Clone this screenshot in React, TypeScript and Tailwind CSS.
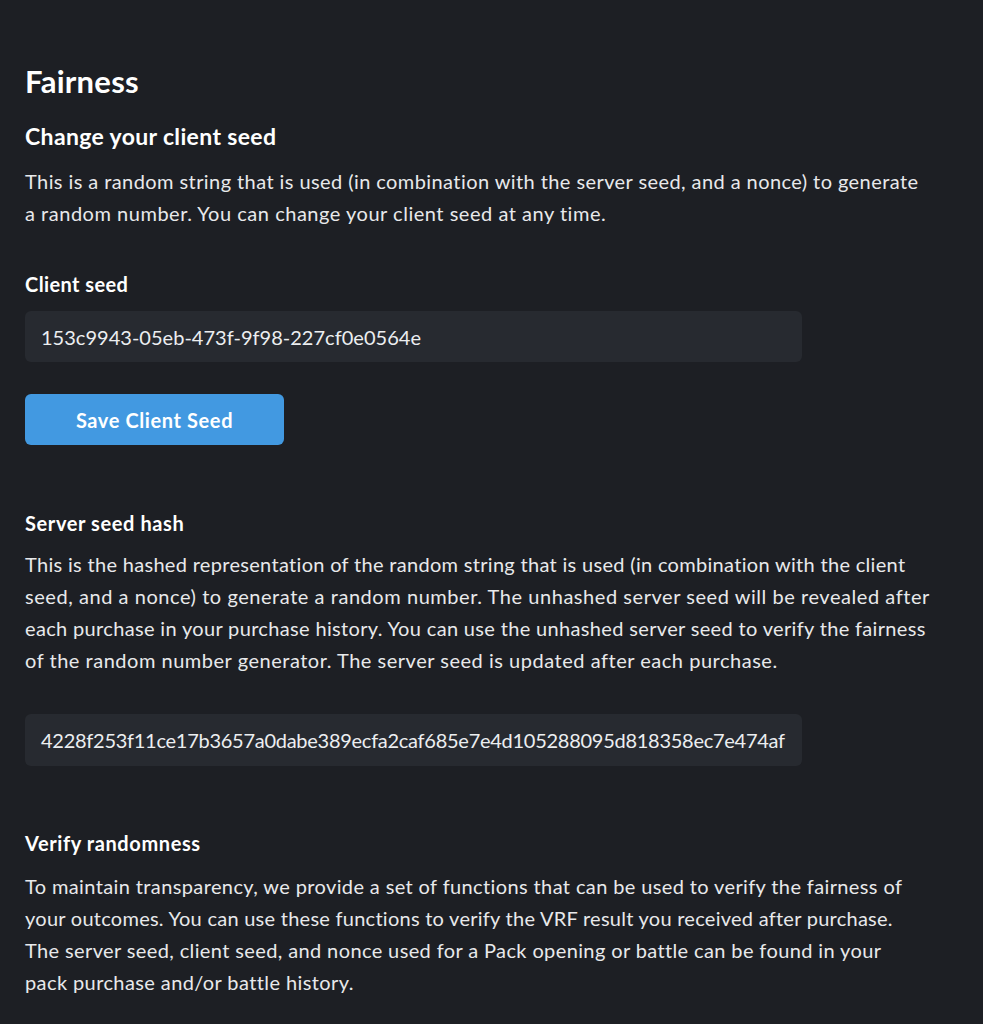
const seedHash = '4228f253f11ce17b3657a0dabe389ecfa2caf685e7e4d105288095d818358ec7e474af';

type Line = { text: string; cls: string };

function Lines({ lines, className }: { lines: Line[]; className?: string }) {
  return (
    <p className={className}>
      {lines.map((l, i) => (
        <span key={i} className={`block whitespace-nowrap ${l.cls}`}>
          {l.text}
        </span>
      ))}
    </p>
  );
}

export default function App() {
  return (
    <div className="min-h-[1024px] w-full bg-[#1d1f24] text-white font-['Lato','Liberation_Sans',sans-serif]">
      <div className="px-[25px] pt-[63px] pb-10">
        <h1 className="text-[31px] leading-[36px] font-bold tracking-[0.25px]">Fairness</h1>

        <h2 className="mt-[23px] text-[23px] leading-[28px] font-bold tracking-[0.35px]">Change your client seed</h2>
        <Lines
          className="mt-[15px] text-[20px] leading-[32px] text-[#e8e9eb]"
          lines={[
            { text: 'This is a random string that is used (in combination with the server seed, and a nonce) to generate', cls: 'tracking-[0.42px]' },
            { text: 'a random number. You can change your client seed at any time.', cls: 'tracking-[0.52px]' },
          ]}
        />

        <label className="block mt-[43px] text-[20px] leading-[24px] font-bold tracking-[0.4px]">Client seed</label>
        <div className="mt-[15px] w-[777px] h-[51px] rounded-md bg-[#272a30] flex items-center px-4 text-[20px] text-[#eceef0] tracking-[0.02px]">
          153c9943-05eb-473f-9f98-227cf0e0564e
        </div>

        <button className="mt-[32px] w-[259px] h-[51px] rounded-md bg-[#4299e1] text-[20px] font-bold text-white tracking-[0.6px]">
          Save Client Seed
        </button>

        <h3 className="mt-[66px] text-[20px] leading-[24px] font-bold tracking-[0.6px]">Server seed hash</h3>
        <Lines
          className="mt-[13px] text-[20px] leading-[32px] text-[#e8e9eb]"
          lines={[
            { text: 'This is the hashed representation of the random string that is used (in combination with the client', cls: 'tracking-[0.31px]' },
            { text: 'seed, and a nonce) to generate a random number. The unhashed server seed will be revealed after', cls: 'tracking-[0.55px]' },
            { text: 'each purchase in your purchase history. You can use the unhashed server seed to verify the fairness', cls: 'tracking-[0.34px]' },
            { text: 'of the random number generator. The server seed is updated after each purchase.', cls: 'tracking-[0.52px]' },
          ]}
        />

        <div className="mt-[38px] w-[777px] h-[52px] rounded-md bg-[#272a30] flex items-center px-4 overflow-hidden whitespace-nowrap text-[20px] text-[#eceef0] tracking-[-0.27px]">
          {seedHash}
        </div>

        <h3 className="mt-[65px] text-[20px] leading-[24px] font-bold tracking-[0.6px]">Verify randomness</h3>
        <Lines
          className="mt-[15px] text-[20px] leading-[32px] text-[#e8e9eb]"
          lines={[
            { text: 'To maintain transparency, we provide a set of functions that can be used to verify the fairness of', cls: 'tracking-[0.38px]' },
            { text: 'your outcomes. You can use these functions to verify the VRF result you received after purchase.', cls: 'tracking-[0.26px]' },
            { text: 'The server seed, client seed, and nonce used for a Pack opening or battle can be found in your', cls: 'tracking-[0.38px]' },
            { text: 'pack purchase and/or battle history.', cls: 'tracking-[0.4px]' },
          ]}
        />
      </div>
    </div>
  );
}
